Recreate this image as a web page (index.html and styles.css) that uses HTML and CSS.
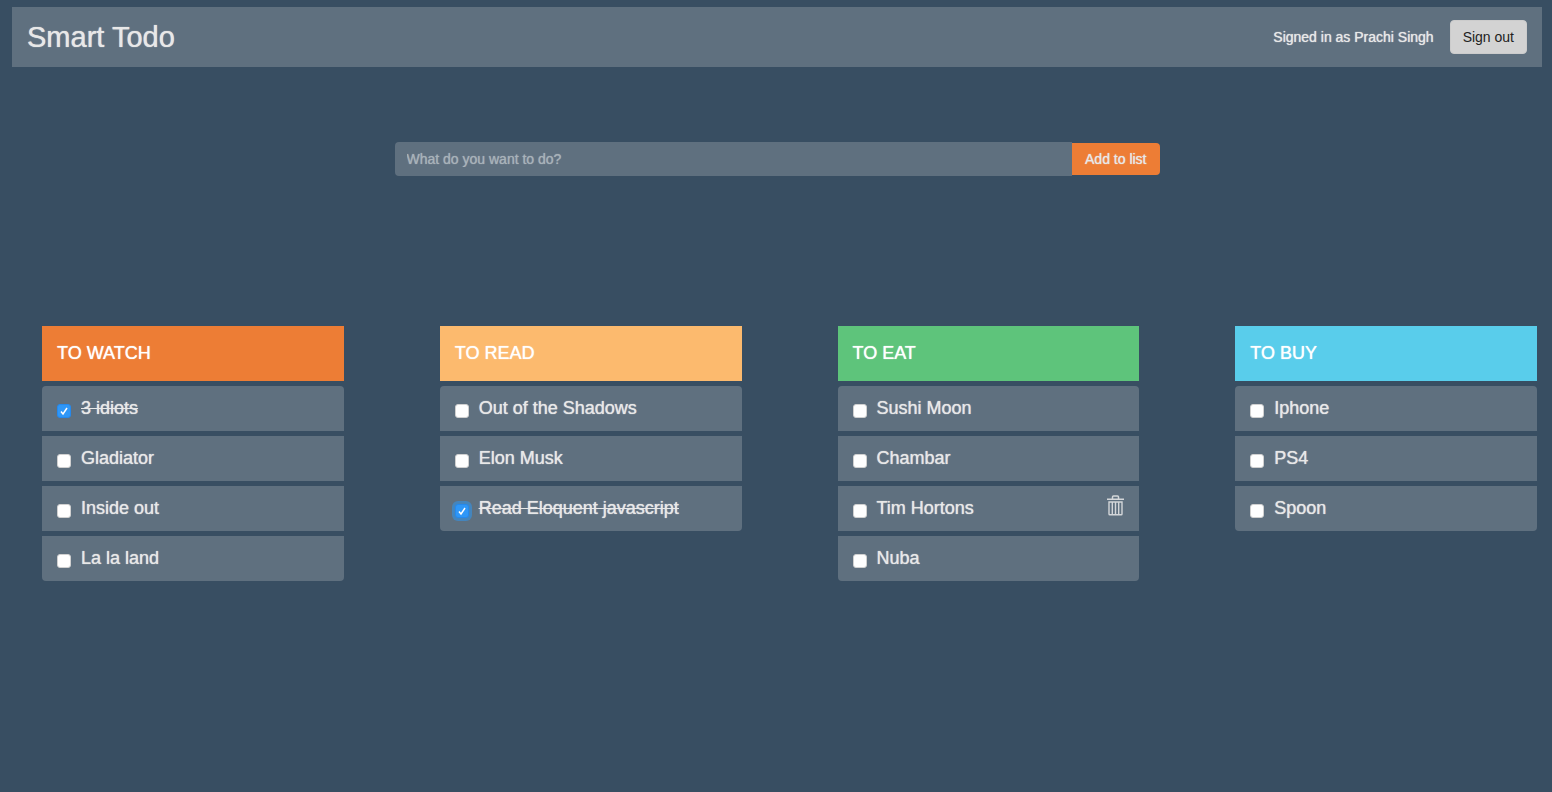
FILE: index.html
```html
<!DOCTYPE html>
<html lang="en">
<head>
<meta charset="utf-8">
<meta name="viewport" content="width=device-width, initial-scale=1">
<title>Smart Todo</title>
<link rel="stylesheet" href="styles.css">
</head>
<body>
<header class="navbar">
  <h1 class="brand">Smart Todo</h1>
  <div class="account">
    <span class="account-name">Signed in as Prachi Singh</span>
    <button class="sign-out" type="button">Sign out</button>
  </div>
</header>
<main>
  <form class="add-form">
    <input class="add-input" type="text" aria-label="New item" placeholder="What do you want to do?">
    <button class="add-button" type="button">Add to list</button>
  </form>
  <div class="lists">
    <section>
      <h2 class="list-title watch">TO WATCH</h2>
      <ul class="items">
        <li class="item"><label class="item-label"><input class="check" type="checkbox" checked><span class="item-text">3 idiots</span></label></li>
        <li class="item"><label class="item-label"><input class="check" type="checkbox"><span class="item-text">Gladiator</span></label></li>
        <li class="item"><label class="item-label"><input class="check" type="checkbox"><span class="item-text">Inside out</span></label></li>
        <li class="item"><label class="item-label"><input class="check" type="checkbox"><span class="item-text">La la land</span></label></li>
      </ul>
    </section>
    <section>
      <h2 class="list-title read">TO READ</h2>
      <ul class="items">
        <li class="item"><label class="item-label"><input class="check" type="checkbox"><span class="item-text">Out of the Shadows</span></label></li>
        <li class="item"><label class="item-label"><input class="check" type="checkbox"><span class="item-text">Elon Musk</span></label></li>
        <li class="item"><label class="item-label"><input class="check active" type="checkbox" checked><span class="item-text">Read Eloquent javascript</span></label></li>
      </ul>
    </section>
    <section>
      <h2 class="list-title eat">TO EAT</h2>
      <ul class="items">
        <li class="item"><label class="item-label"><input class="check" type="checkbox"><span class="item-text">Sushi Moon</span></label></li>
        <li class="item"><label class="item-label"><input class="check" type="checkbox"><span class="item-text">Chambar</span></label></li>
        <li class="item">
          <label class="item-label"><input class="check" type="checkbox"><span class="item-text">Tim Hortons</span></label>
          <button class="delete" type="button" aria-label="Delete Tim Hortons">
            <svg width="17" height="21" viewBox="0 0 17 21" fill="none" stroke="currentColor" aria-hidden="true">
              <path d="M0 4.300H17M5.500 4V2Q5.500 1 6.500 1H10.500Q11.500 1 11.500 2V4" stroke-width="1.500"/>
              <path d="M2 7H15V19Q15 19.800 14.200 19.800H2.800Q2 19.800 2 19Z" stroke-width="1.400"/>
              <path d="M5.300 7V19.500M8.500 7V19.500M11.700 7V19.500" stroke-width="1.400"/>
            </svg>
          </button>
        </li>
        <li class="item"><label class="item-label"><input class="check" type="checkbox"><span class="item-text">Nuba</span></label></li>
      </ul>
    </section>
    <section>
      <h2 class="list-title buy">TO BUY</h2>
      <ul class="items">
        <li class="item"><label class="item-label"><input class="check" type="checkbox"><span class="item-text">Iphone</span></label></li>
        <li class="item"><label class="item-label"><input class="check" type="checkbox"><span class="item-text">PS4</span></label></li>
        <li class="item"><label class="item-label"><input class="check" type="checkbox"><span class="item-text">Spoon</span></label></li>
      </ul>
    </section>
  </div>
</main>
</body>
</html>
```
FILE: styles.css
```css
* {
  box-sizing: border-box;
}

body {
  margin: 0;
  padding: 7px 10px 0 12px;
  background: #384e62;
  color: #e8e8e8;
  font-family: "Helvetica Neue", "Liberation Sans", Arial, sans-serif;
  font-size: 14px;
  line-height: 20px;
}

h1,
h2,
ul {
  margin: 0;
  padding: 0;
  font-weight: 400;
}

button,
input {
  font: inherit;
}

.brand,
.account-name,
.add-button,
.add-input::placeholder,
.list-title,
.item-text {
  text-shadow: 0 0 1px currentColor;
}

.navbar {
  display: flex;
  align-items: center;
  justify-content: space-between;
  min-height: 60px;
  padding: 0 15px;
  background: #5f707f;
}

.brand {
  font-size: 29px;
  line-height: 40px;
}

.account {
  display: flex;
  align-items: center;
  gap: 16px;
}

.sign-out {
  padding: 6px 12px;
  border: 1px solid #ccc;
  border-radius: 4px;
  background: #d3d3d3;
  color: #222;
}

.add-form {
  display: flex;
  align-items: center;
  width: 50%;
  margin: 75px auto 0;
}

.add-input {
  flex: 1;
  min-width: 0;
  height: 34px;
  padding: 6px 12px;
  border: 0;
  border-radius: 4px 0 0 4px;
  background: #5f707f;
  color: #e8e8e8;
}

.add-input::placeholder {
  color: #a8b2b9;
  opacity: 1;
}

.add-button {
  height: 32px;
  padding: 0 13px;
  border: 0;
  border-radius: 0 4px 4px 0;
  background: #ed7d35;
  color: #e8e8e8;
}

.lists {
  display: grid;
  grid-template-columns: repeat(4, 1fr);
  gap: 96px;
  margin-top: 150px;
  padding: 0 5px 0 30px;
}

.list-title {
  padding: 15px;
  color: #fff;
  font-size: 18px;
  line-height: 25px;
}

.watch {
  background: #ed7d35;
}

.read {
  background: #fcba6e;
}

.eat {
  background: #5ec47b;
}

.buy {
  background: #59cdeb;
}

.items {
  display: grid;
  gap: 5px;
  padding-top: 5px;
  list-style: none;
}

.item {
  display: flex;
  align-items: flex-start;
  justify-content: space-between;
  min-height: 45px;
  padding: 9px 15px;
  background: #5f707f;
}

.item:first-child {
  border-radius: 4px 4px 0 0;
}

.item:last-child {
  border-radius: 0 0 4px 4px;
}

.item-label {
  display: flex;
  align-items: flex-start;
  gap: 10px;
  font-size: 18px;
  line-height: 26px;
}

.check {
  flex: none;
  width: 14px;
  height: 14px;
  margin: 9px 0 0;
  border: 1px solid #d0d0d0;
  border-radius: 3px;
  background: #fff;
  appearance: none;
}

.check:checked {
  border-color: #2489ee;
  background: #2f97f7 url("data:image/svg+xml,%3Csvg xmlns='http://www.w3.org/2000/svg' viewBox='0 0 12 12'%3E%3Cpath d='M3 6.500L5 9L9 3' fill='none' stroke='white' stroke-width='1.500'/%3E%3C/svg%3E") center / 12px 12px;
}

.check.active {
  box-shadow: 0 0 0 3px #4485bd;
}

.check:checked + .item-text {
  text-decoration: line-through;
  text-decoration-thickness: 1px;
}

.delete {
  display: flex;
  padding: 0;
  border: 0;
  background: none;
  color: #d3d6d9;
}
```
